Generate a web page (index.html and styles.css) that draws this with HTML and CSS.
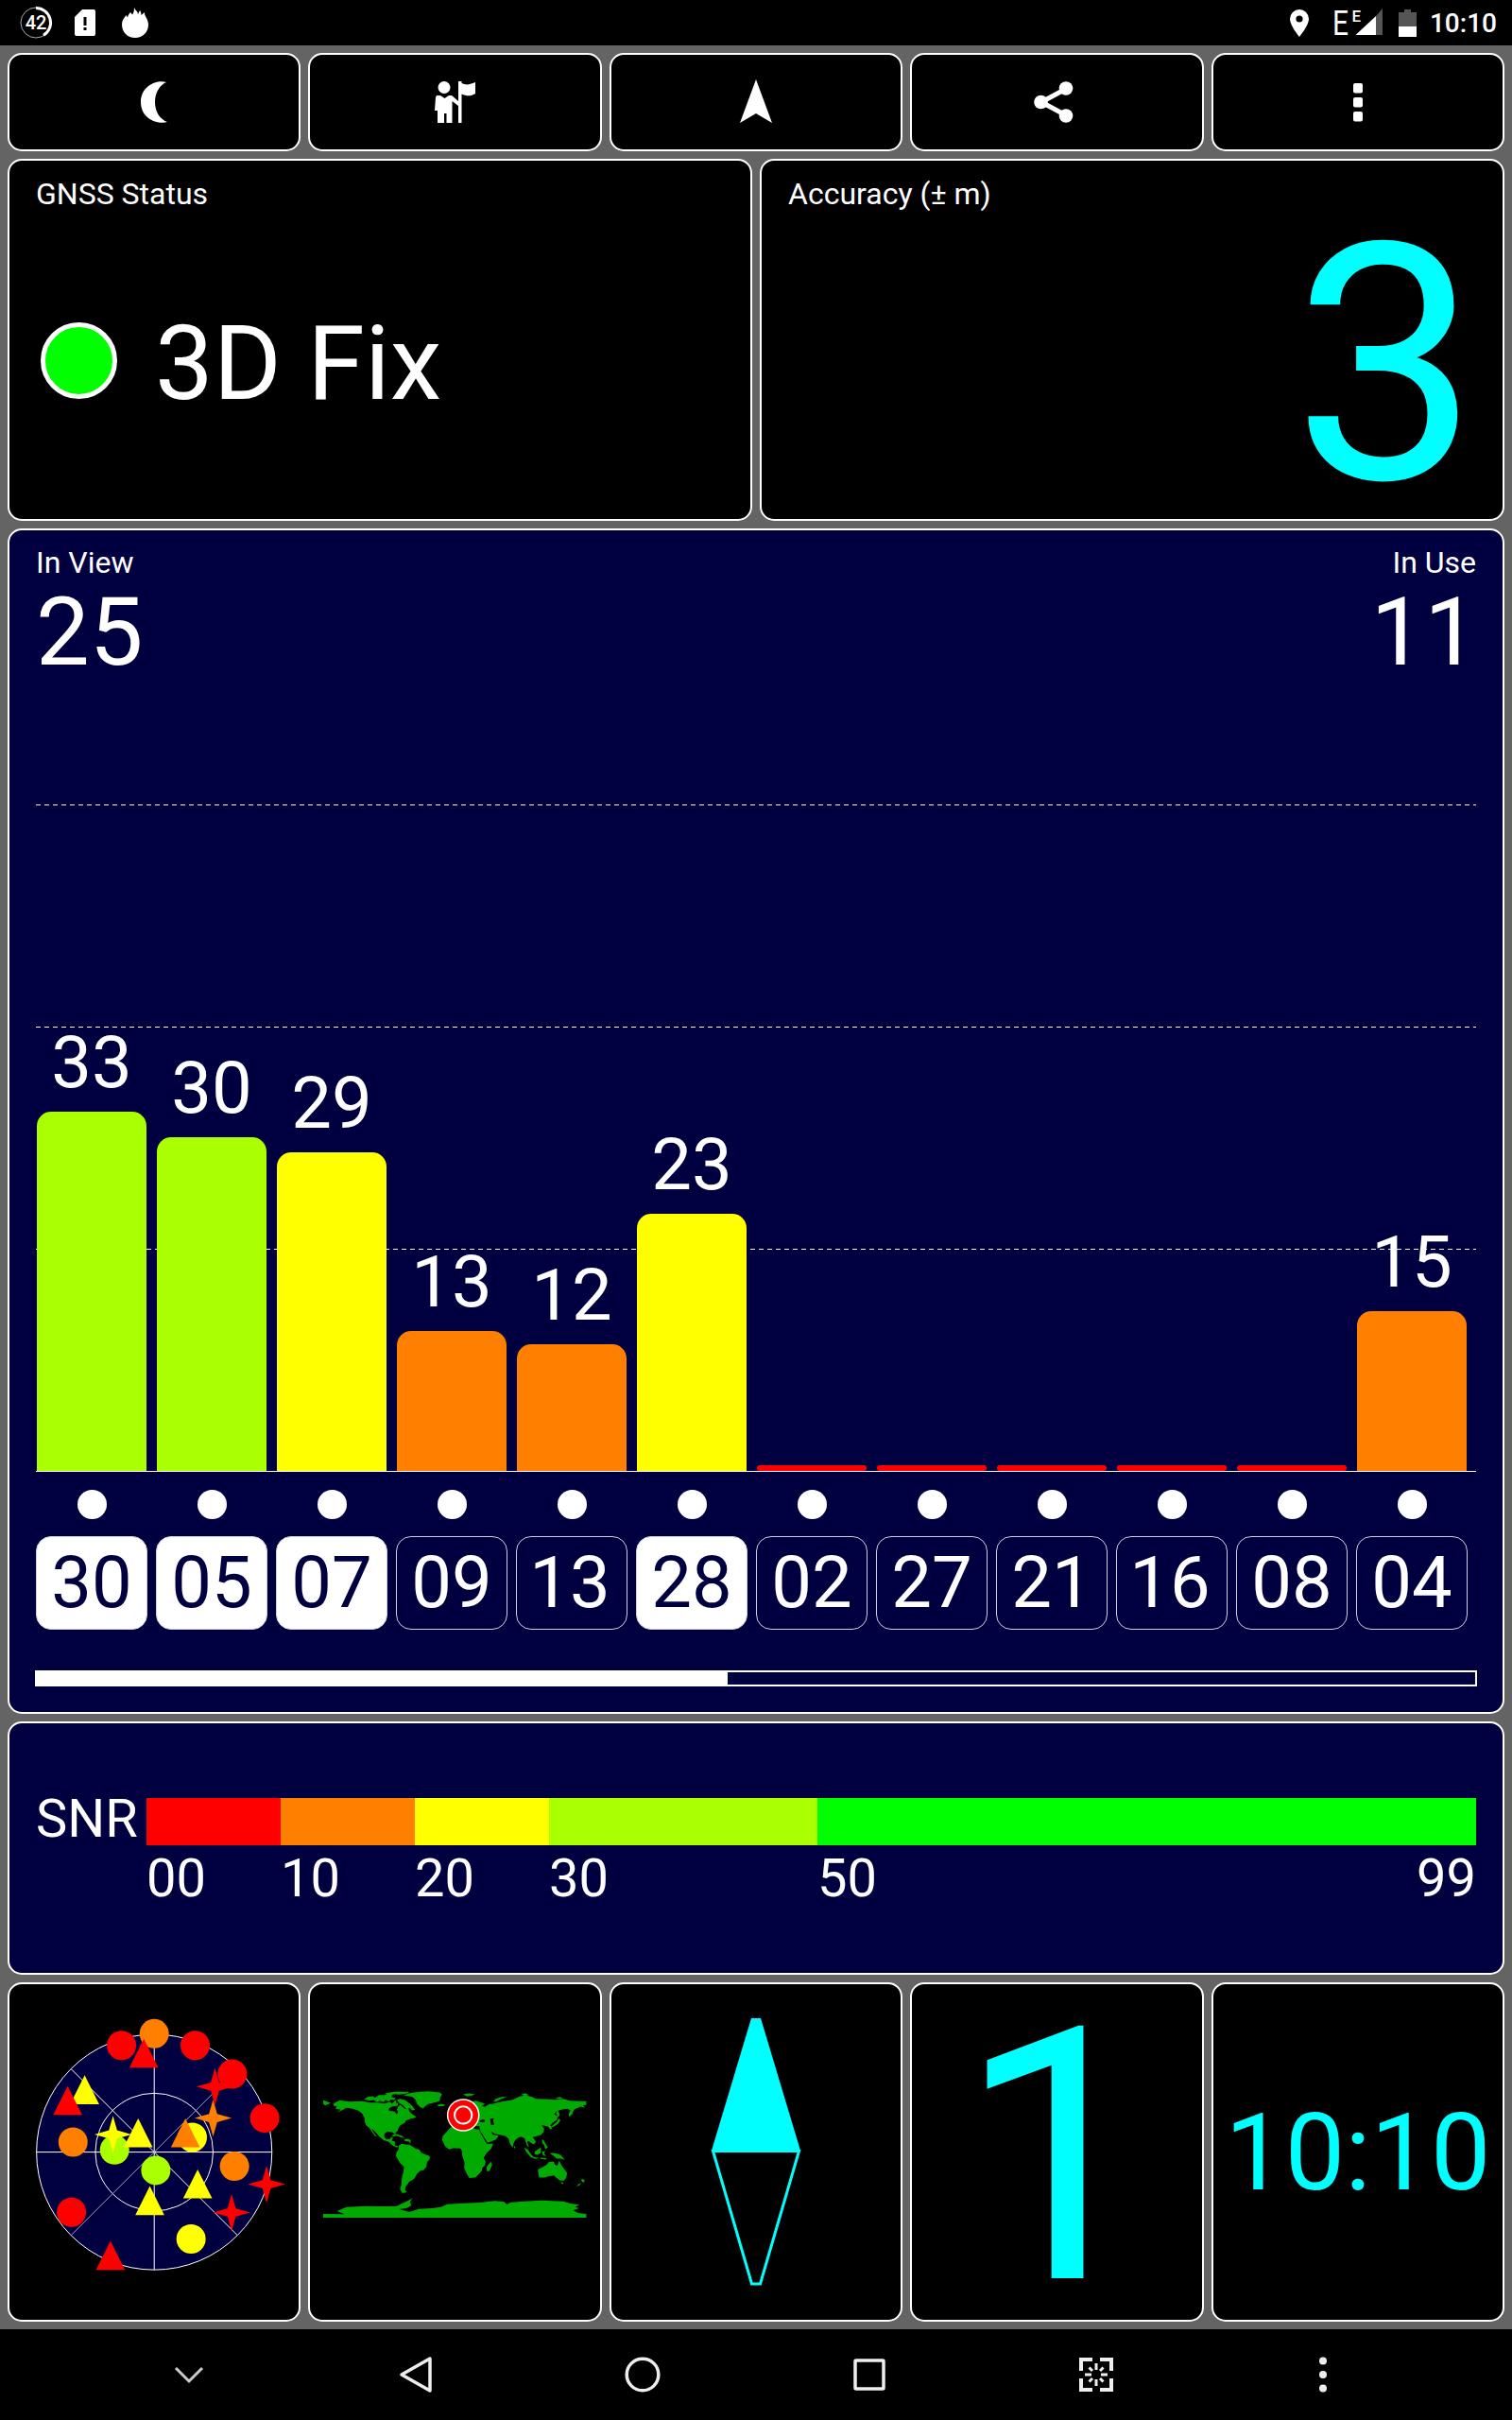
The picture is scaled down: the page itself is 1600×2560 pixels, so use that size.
FILE: index.html
```html
<!DOCTYPE html>
<html lang="en">
<head>
    <meta charset="UTF-8">
    <meta name="viewport" content="width=device-width, initial-scale=1.0">
    <title>GNSS Status</title>
    <link rel="stylesheet" href="styles.css">
</head>
<body>
    <div class="status-bar">
        <div class="status-left">
            <svg class="ico-42" width="36" height="36" viewBox="0 0 36 36">
                <circle cx="18" cy="18" r="16" fill="none" stroke="#aaa" stroke-width="1"/>
                <path d="M18 2.500A15.500 15.500 0 0 1 26 31.300" fill="none" stroke="#fff" stroke-width="3"/>
                <text x="18" y="25" text-anchor="middle" class="ring-text">42</text>
            </svg>
            <svg class="ico-sim" width="22" height="28" viewBox="0 0 22 28">
                <path fill="#fff" fill-rule="evenodd" d="M8 0H20Q22 0 22 2V26Q22 28 20 28H2Q0 28 0 26V8ZM9.500 8V17H12.500V8ZM9.500 19V22H12.500V19Z"/>
            </svg>
            <svg width="28" height="32" viewBox="0 0 28 32">
                <path fill="#fff" d="M13 0C14 3 17 4 17 7L19 3C20 4 20.500 6 20.500 8L24 5C23.500 9 28 12 28 18C28 26 22 32 14 32C6 32 0 26 0 18C0 14 1.500 12 4.500 8L6 10.500C6.500 8 7.500 6.500 9 5L11 7.500C12.500 5.500 13 3 13 0Z"/>
            </svg>
        </div>
        <div class="status-right">
            <svg class="ico-pin" width="20" height="29" viewBox="0 0 20 29">
                <path fill="#fff" fill-rule="evenodd" d="M10 0A10 10 0 0 0 0 10C0 17 10 29 10 29S20 17 20 10A10 10 0 0 0 10 0ZM10 6.400A3.600 3.600 0 1 1 10 13.600A3.600 3.600 0 1 1 10 6.400Z"/>
            </svg>
            <svg class="ico-signal" width="54" height="48" viewBox="0 -9 54 48">
                <text x="1" y="28" class="net-big" textLength="17" lengthAdjust="spacingAndGlyphs">E</text>
                <text x="21.500" y="13.500" class="net-small">E</text>
                <path fill="#555" d="M54 0V28H47V8Z"/>
                <path fill="#fff" d="M47 8V28H25.500Z"/>
            </svg>
            <svg class="ico-battery" width="19" height="29" viewBox="0 0 19 29">
                <path fill="#555" d="M6 0H13V3H19V18H0V3H6Z"/>
                <path fill="#fff" d="M0 18H19V29H0Z"/>
            </svg>
            <span class="clock">10:10</span>
        </div>
    </div>

    <div class="screen">
        <div class="row toolbar">
            <div class="tile">
                <svg width="28" height="44" viewBox="0 0 28 44">
                    <path fill="#fff" d="M27 1C18-2 0 4 0 22S18 46 28 43C20 40 15 32 15 22S20 4 27 1Z"/>
                </svg>
            </div>
            <div class="tile">
                <svg width="44" height="44" viewBox="0 0 44 44">
                    <circle cx="10" cy="6.500" r="6.500" fill="#fff"/>
                    <path fill="#fff" d="M2 15H6L10.500 18L15 15H18L25 21V0H28.500V2C33 4 36 4 43 1V13C38 16 34 16 28.500 13.500V44H25V26L18.500 21V44H12.500V34H10V44H3V31H0L1 17Z"/>
                </svg>
            </div>
            <div class="tile">
                <svg width="34" height="48" viewBox="0 0 34 48">
                    <path fill="#fff" d="M17 0L34 46L17 36L0 46Z"/>
                </svg>
            </div>
            <div class="tile">
                <svg class="ico-share" width="42" height="44" viewBox="0 0 42 44">
                    <path d="M34 8L8 22L34 36" fill="none" stroke="#fff" stroke-width="5"/>
                    <circle cx="34" cy="7.500" r="7.300" fill="#fff"/>
                    <circle cx="7.500" cy="22" r="7.300" fill="#fff"/>
                    <circle cx="34" cy="36.500" r="7.300" fill="#fff"/>
                </svg>
            </div>
            <div class="tile">
                <svg width="10" height="42" viewBox="0 0 10 42">
                    <rect y="1" width="10" height="10.500" rx="2" fill="#fff"/>
                    <rect y="16" width="10" height="10.500" rx="2" fill="#fff"/>
                    <rect y="31" width="10" height="10.500" rx="2" fill="#fff"/>
                </svg>
            </div>
        </div>

        <div class="row summary">
            <div class="tile card">
                <div class="label">GNSS Status</div>
                <div class="fix">
                    <span class="led"></span>
                    <span>3D Fix</span>
                </div>
            </div>
            <div class="tile card">
                <div class="label">Accuracy (± m)</div>
                <div class="accuracy">3</div>
            </div>
        </div>

        <div class="tile navy satellites">
            <div class="counts">
                <div>
                    <div class="label">In View</div>
                    <div class="count">25</div>
                </div>
                <div class="in-use">
                    <div class="label">In Use</div>
                    <div class="count">11</div>
                </div>
            </div>
            <div class="plot">
                <div class="grid">
                    <div></div>
                    <div></div>
                    <div></div>
                </div>
                <div class="bars">
                    <div class="col"><span class="snr">33</span><div class="bar lime" style="height: 380.500px"></div></div>
                    <div class="col"><span class="snr">30</span><div class="bar lime" style="height: 353.500px"></div></div>
                    <div class="col"><span class="snr">29</span><div class="bar yellow" style="height: 337.500px"></div></div>
                    <div class="col"><span class="snr">13</span><div class="bar orange" style="height: 148.500px"></div></div>
                    <div class="col"><span class="snr">12</span><div class="bar orange" style="height: 134.500px"></div></div>
                    <div class="col"><span class="snr">23</span><div class="bar yellow" style="height: 272.500px"></div></div>
                    <div class="col"><div class="bar none"></div></div>
                    <div class="col"><div class="bar none"></div></div>
                    <div class="col"><div class="bar none"></div></div>
                    <div class="col"><div class="bar none"></div></div>
                    <div class="col"><div class="bar none"></div></div>
                    <div class="col"><span class="snr">15</span><div class="bar orange" style="height: 169.500px"></div></div>
                </div>
            </div>
            <div class="ids">
                <div class="sat"><i></i><span class="id used">30</span></div>
                <div class="sat"><i></i><span class="id used">05</span></div>
                <div class="sat"><i></i><span class="id used">07</span></div>
                <div class="sat"><i></i><span class="id">09</span></div>
                <div class="sat"><i></i><span class="id teen">13</span></div>
                <div class="sat"><i></i><span class="id used">28</span></div>
                <div class="sat"><i></i><span class="id">02</span></div>
                <div class="sat"><i></i><span class="id">27</span></div>
                <div class="sat"><i></i><span class="id">21</span></div>
                <div class="sat"><i></i><span class="id teen">16</span></div>
                <div class="sat"><i></i><span class="id">08</span></div>
                <div class="sat"><i></i><span class="id">04</span></div>
            </div>
            <div class="scroll"><div class="thumb" style="width: 48%"></div></div>
        </div>

        <div class="tile navy legend">
            <div class="legend-name">SNR</div>
            <div class="scale">
                <div class="step s0"><div class="swatch red"></div><span>00</span></div>
                <div class="step s10"><div class="swatch orange"></div><span>10</span></div>
                <div class="step s20"><div class="swatch yellow"></div><span>20</span></div>
                <div class="step s30"><div class="swatch lime"></div><span>30</span></div>
                <div class="step s50"><div class="swatch green"></div><span>50</span><span class="max">99</span></div>
            </div>
        </div>

        <div class="row widgets">
            <!-- sky view -->
            <div class="tile">
                <svg class="fill" viewBox="30 26 920 1067">
                    <defs>
                        <path id="tri" d="M0-46L46 46H-46Z"/>
                        <path id="star" d="M0-59L13-13L59 0L13 13L0 59L-13 13L-59 0L-13-13Z"/>
                    </defs>
                    <circle cx="490" cy="559" r="374" fill="#000040"/>
                    <g fill="none" stroke="#fff" stroke-width="3">
                        <circle cx="490" cy="559" r="374"/>
                        <circle cx="490" cy="559" r="187"/>
                        <path d="M116 559H864M490 185V933M226 295L754 823"/>
                        <path d="M754 295L226 823" stroke="#a0a0b8"/>
                    </g>
                    <circle cx="490" cy="183" r="46.500" fill="#ff8000"/>
                    <circle cx="386" cy="220" r="46.500" fill="#f00"/>
                    <circle cx="620" cy="220" r="46.500" fill="#f00"/>
                    <circle cx="738" cy="311" r="46.500" fill="#f00"/>
                    <circle cx="841" cy="451" r="46.500" fill="#f00"/>
                    <circle cx="232" cy="527" r="46.500" fill="#ff8000"/>
                    <circle cx="364" cy="552" r="46.500" fill="#af0"/>
                    <circle cx="495" cy="617" r="46.500" fill="#af0"/>
                    <circle cx="611" cy="512" r="46.500" fill="#ff0"/>
                    <circle cx="745" cy="604" r="46.500" fill="#ff8000"/>
                    <circle cx="227" cy="750" r="46.500" fill="#f00"/>
                    <circle cx="607" cy="835" r="46.500" fill="#ff0"/>
                    <use href="#tri" x="457" y="245" fill="#f00"/>
                    <use href="#tri" x="269" y="361" fill="#ff0"/>
                    <use href="#tri" x="215" y="395" fill="#f00"/>
                    <use href="#star" x="359" y="503" fill="#ff0"/>
                    <use href="#tri" x="439" y="498" fill="#ff0"/>
                    <use href="#tri" x="589" y="498" fill="#ff8000"/>
                    <use href="#tri" x="628" y="660" fill="#ff0"/>
                    <use href="#tri" x="476" y="713" fill="#ff0"/>
                    <use href="#tri" x="351" y="887" fill="#f00"/>
                    <use href="#star" x="677" y="451" fill="#ff8000"/>
                    <use href="#star" x="683" y="351" fill="#f00"/>
                    <use href="#star" x="847" y="661" fill="#f00"/>
                    <use href="#star" x="736" y="751" fill="#f00"/>
                </svg>
            </div>
            <!-- world map -->
            <div class="tile">
                <svg class="fill" viewBox="24 -245 920 1066">
                    <g fill="#00aa00">
                        <path d="M66 123L76 126L90 132L72 139L66 134ZM98 134L118 123L150 127L190 126L215 130L240 130L262 133L280 127L284 134L296 122L300 134L304 128L303 140L284 143L274 150L276 157L292 158L300 167L304 160L300 152L306 140L312 138L326 151L336 148L340 158L352 170L354 178L335 185L328 188L326 194L312 202L306 209L302 221L296 226L296 233L287 225L270 222L261 229L260 239L266 247L278 246L282 240L288 240L284 251L294 254L294 266L306 269L300 273L288 268L274 255L258 250L244 238L236 228L226 218L220 213L228 228L236 237L230 236L214 212L203 203L198 192L197 178L190 166L178 156L160 150L140 147L128 154L108 163L122 153L104 149L110 143L100 141Z"/>
                        <path d="M196 119L208 112L224 110L230 115L244 106L262 106L270 102L286 106L282 113L296 116L292 122L280 121L276 127L264 122L258 129L246 125L236 128L226 122L212 124ZM262 101L290 96L340 96L334 101L308 105L292 103L280 107ZM310 118L326 122L338 131L350 142L358 154L348 155L342 148L330 151L320 139L308 132L300 122ZM342 170L354 170L362 177L350 181Z"/>
                        <path d="M322 107L340 100L360 97L400 94L436 98L444 104L438 114L436 125L420 130L400 135L390 142L384 149L374 145L364 135L360 122L350 112ZM428 138L440 134L454 137L448 142L432 142ZM510 104L530 101L548 104L538 108L524 111ZM284 233L300 230L316 236L326 243L314 241L300 236L288 238ZM324 247L336 245L344 250L343 262L339 254L324 252Z"/>
                        <path d="M307 266L316 261L330 264L340 264L350 270L360 277L372 280L378 290L394 296L405 301L404 310L396 320L394 334L386 344L374 347L364 357L356 371L346 378L340 381L334 390L328 397L326 407L332 415L318 418L310 405L314 394L316 370L321 350L323 334L312 325L302 308L297 300L299 288L305 280Z"/>
                        <path d="M470 210L484 205L510 200L540 207L552 216L562 215L566 226L576 244L586 261L606 261L600 276L584 292L576 306L582 318L580 330L572 337L570 347L560 358L550 368L530 370L522 356L514 338L515 320L508 300L507 284L502 276L480 275L466 279L454 270L444 250L446 236L460 222ZM599 318L603 328L594 348L586 348L585 336L590 328Z"/>
                        <path d="M500 150L530 130L550 124L570 130L580 135L570 140L580 144L594 135L606 134L620 130L640 126L668 121L690 111L710 107L730 112L742 118L770 119L800 121L830 119L850 124L880 126L902 126L902 137L892 139L898 147L884 143L868 150L862 154L858 166L848 176L846 166L852 155L842 150L826 152L806 158L800 168L812 174L808 186L794 195L788 204L794 212L788 216L780 206L770 204L760 202L768 214L766 225L756 234L742 238L732 240L742 255L736 263L726 258L718 252L714 256L720 270L714 268L710 256L706 244L696 239L688 240L676 250L670 262L668 274L660 262L654 244L644 236L624 232L612 230L600 222L604 232L624 236L614 248L588 258L578 244L566 224L562 206L540 206L520 206L500 200Z"/>
                        <path d="M606 127L614 118L634 112L650 112L632 119L618 126ZM696 104L708 100L720 106L706 109ZM804 115L818 112L830 118L816 119ZM808 153L814 160L818 170L812 176L806 164ZM814 181L820 186L812 198L800 206L786 209L798 200L808 192ZM674 267L677 273L672 277ZM704 272L716 280L726 294L734 302L752 306L740 309L726 304L712 288ZM738 286L750 278L758 272L757 290L748 296L738 294ZM762 246L768 252L774 264L780 272L772 278L768 266L762 258ZM762 286L772 284L768 292L774 300L764 298ZM756 305L776 307L774 311L756 309ZM794 290L806 292L820 296L834 312L820 308L808 308L796 298L786 292Z"/>
                        <path d="M748 343L762 336L776 328L784 319L798 317L802 327L810 331L816 314L822 328L832 342L841 354L838 370L830 379L818 377L806 368L800 362L784 364L770 368L752 368L750 356ZM820 383L829 384L826 391ZM888 371L898 378L892 385L886 378ZM886 385L880 393L872 397L876 390Z"/>
                        <path d="M66 484L134 485L110 475L140 462L200 459L250 460L300 459L318 450L340 440L350 432L342 446L346 458L330 466L308 469L340 478L370 468L410 466L440 462L460 453L500 451L560 448L610 443L640 445L650 454L660 448L700 444L760 441L830 444L850 451L880 455L866 462L880 466L860 473L876 481L902 484L902 496L66 496Z"/>
                    </g>
                    <!-- inland seas -->
                    <g fill="#000">
                        <path d="M596 182L608 180L606 190L610 200L600 202L598 192ZM562 187L578 184L580 191L566 193ZM540 205L562 206L562 212L546 213ZM564 222L570 228L588 258L582 254Z"/>
                    </g>
                    <circle cx="511" cy="170" r="52" fill="#fff"/>
                    <circle cx="511" cy="170" r="47.500" fill="#f00"/>
                    <circle cx="511" cy="170" r="27.500" fill="none" stroke="#fff" stroke-width="6"/>
                </svg>
            </div>
            <!-- compass needle -->
            <div class="tile">
                <svg width="96" height="286" viewBox="0 0 96 286">
                    <path fill="#0ff" d="M43 2H53L95 142H1Z"/>
                    <path fill="none" stroke="#0ff" stroke-width="3" d="M2.500 142.500H93.500L52.500 283H43.500Z"/>
                </svg>
            </div>
            <div class="tile"><span class="satcount">1</span></div>
            <div class="tile"><span class="time">10:10</span></div>
        </div>
    </div>

    <div class="nav-bar">
        <div class="nav-item">
            <svg width="32" height="20" viewBox="0 0 32 20"><path d="M2 3L16 17L30 3" fill="none" stroke="#ccc" stroke-width="3"/></svg>
        </div>
        <div class="nav-item">
            <svg width="36" height="40" viewBox="0 0 36 40"><path d="M33 3V37L3 20Z" fill="none" stroke="#eee" stroke-width="3.500" stroke-linejoin="round"/></svg>
        </div>
        <div class="nav-item">
            <svg width="40" height="40" viewBox="0 0 40 40"><circle cx="20" cy="20" r="16.800" fill="none" stroke="#eee" stroke-width="3.500"/></svg>
        </div>
        <div class="nav-item">
            <svg width="36" height="36" viewBox="0 0 36 36"><rect x="3" y="3" width="30" height="30" rx="1" fill="none" stroke="#eee" stroke-width="3.500"/></svg>
        </div>
        <div class="nav-item">
            <svg width="36" height="36" viewBox="0 0 36 36" fill="none" stroke="#eee">
                <path d="M2 14V2H14M22 2H34V14M34 22V34H22M14 34H2V22" stroke-width="4"/>
                <path d="M18 6V13M18 23V30M6 18H13M23 18H30M10.500 10.500L14 14M25.500 10.500L22 14M10.500 25.500L14 22M25.500 25.500L22 22" stroke-width="3"/>
            </svg>
        </div>
        <div class="nav-item">
            <svg width="10" height="40" viewBox="0 0 10 40" fill="#eee"><circle cx="5" cy="5.500" r="4"/><circle cx="5" cy="20" r="4"/><circle cx="5" cy="34.500" r="4"/></svg>
        </div>
    </div>
</body>
</html>
```
FILE: styles.css
```css
* {
    box-sizing: border-box;
}

body {
    margin: 0;
    width: 1600px;
    height: 2560px;
    display: flex;
    flex-direction: column;
    background: #000;
    color: #fff;
    font-family: Roboto, "Liberation Sans", sans-serif;
    overflow: hidden;
}

svg {
    display: block;
}

/* top system bar */
.status-bar {
    height: 48px;
    display: flex;
    justify-content: space-between;
    align-items: center;
    padding: 0 16px 0 20px;
}

.status-left, .status-right {
    display: flex;
    align-items: center;
}

.ico-sim {
    margin: 0 28px 0 23px;
}

.ring-text {
    font-size: 20px;
    font-weight: 500;
    fill: #fff;
}

.net-big {
    font-size: 37px;
    font-weight: 400;
    fill: #fff;
}

.net-small {
    font-size: 17px;
    font-weight: 500;
    fill: #fff;
}

.ico-pin {
    margin-right: 24px;
}

.ico-battery {
    margin: 0 14px 0 17px;
}

.clock {
    font-size: 28px;
    font-weight: 500;
    line-height: 46px;
    padding-top: 2px;
}

/* tiles */
.screen {
    height: 2416px;
    display: flex;
    flex-direction: column;
    gap: 8px;
    padding: 8px;
    background: #646464;
}

.row {
    flex: none;
    display: flex;
    gap: 8px;
}

.tile {
    flex: 1;
    min-width: 0;
    display: flex;
    align-items: center;
    justify-content: center;
    background: #000;
    border: 2px solid #fff;
    border-radius: 15px;
}

.navy {
    flex: none;
    background: #000040;
}

.toolbar {
    height: 104px;
}

.ico-share {
    margin-right: 7px;
}

.summary {
    height: 382.5px;
}

.card {
    flex-direction: column;
    align-items: stretch;
    justify-content: flex-start;
    padding: 16px 28px 0;
}

.label {
    font-size: 32px;
    line-height: 38px;
}

.fix {
    display: flex;
    align-items: center;
    gap: 40px;
    margin-top: 91px;
    padding-left: 5px;
    font-size: 110px;
    line-height: 140px;
}

.led {
    width: 81px;
    height: 81px;
    border: 5px solid #fff;
    border-radius: 50%;
    background: #0f0;
    margin-top: -7px;
}

.accuracy {
    font-size: 350px;
    line-height: 320px;
    margin: 2px -3px 0 0;
    text-align: right;
    color: #0ff;
}

/* satellite bars */
.satellites {
    height: 1254.5px;
    flex-direction: column;
    align-items: stretch;
    justify-content: flex-start;
    padding: 15px 28px 0;
}

.counts {
    display: flex;
    justify-content: space-between;
    height: 275.5px;
}

.in-use {
    text-align: right;
}

.in-use .count {
    margin-right: -2px;
}

.count {
    font-size: 101px;
    line-height: 109px;
}

.plot {
    position: relative;
    height: 706px;
    border-bottom: 1px solid #fff;
}

.grid {
    position: absolute;
    inset: 0;
    display: flex;
    flex-direction: column;
}

.grid div {
    flex: 1;
    background: repeating-linear-gradient(90deg, #fff 0, #fff 5px, transparent 5px, transparent 9px) top / 100% 1px no-repeat;
}

.bars {
    position: relative;
    height: 100%;
    display: flex;
}

.col {
    flex: 1;
    display: flex;
    flex-direction: column;
    justify-content: flex-end;
    align-items: center;
    padding: 0 10px 0 1px;
}

.snr {
    font-size: 76px;
    line-height: 90px;
    margin-bottom: 7px;
}

.bar {
    width: 100%;
    border-radius: 15px 15px 0 0;
}

.none {
    height: 6px;
    border-radius: 3px;
    background: #f00;
}

.red { background: #f00; }
.orange { background: #ff8000; }
.yellow { background: #ff0; }
.lime { background: #af0; }
.green { background: #0f0; }

.ids {
    display: flex;
    margin-top: 19px;
}

.sat {
    flex: 1;
    display: flex;
    flex-direction: column;
    align-items: center;
    padding-right: 9px;
}

.sat i {
    width: 31px;
    height: 31px;
    border-radius: 50%;
    background: #fff;
}

.id {
    width: 118px;
    height: 98.5px;
    margin-top: 18px;
    border: 1px solid #d0d0dc;
    border-radius: 16px;
    font-size: 76px;
    line-height: 96.5px;
    text-align: center;
}

.teen {
    padding-right: 4px;
}

.used {
    background: #fff;
    color: #000040;
}

.scroll {
    height: 17px;
    margin: 43.5px -1px 0;
    border: 2px solid #fff;
}

.thumb {
    height: 100%;
    background: #fff;
}

/* legend */
.legend {
    height: 267.5px;
    align-items: flex-start;
    justify-content: flex-start;
    padding: 79px 28px 0;
    font-size: 56px;
    line-height: 66px;
}

.legend-name {
    width: 117px;
    margin-top: -11px;
}

.scale {
    flex: 1;
    display: flex;
}

.s0, .s10, .s20 {
    width: 142px;
}

.s30 {
    width: 284px;
}

.s50 {
    flex: 1;
    display: flex;
    flex-wrap: wrap;
    justify-content: space-between;
}

.swatch {
    width: 100%;
    height: 50px;
}

.step span {
    display: block;
    margin-top: 2px;
}

/* bottom widgets */
.widgets {
    height: 359.5px;
}

.fill {
    width: 100%;
    height: 100%;
}

.satcount {
    font-size: 374px;
    line-height: 340px;
    margin-top: 12px;
    color: #0ff;
}

.time {
    font-size: 113px;
    margin-top: 3px;
    color: #0ff;
}

/* bottom system bar */
.nav-bar {
    height: 96px;
    display: flex;
    padding: 0 80px;
}

.nav-item {
    flex: 1;
    display: flex;
    align-items: center;
    justify-content: center;
}
```
